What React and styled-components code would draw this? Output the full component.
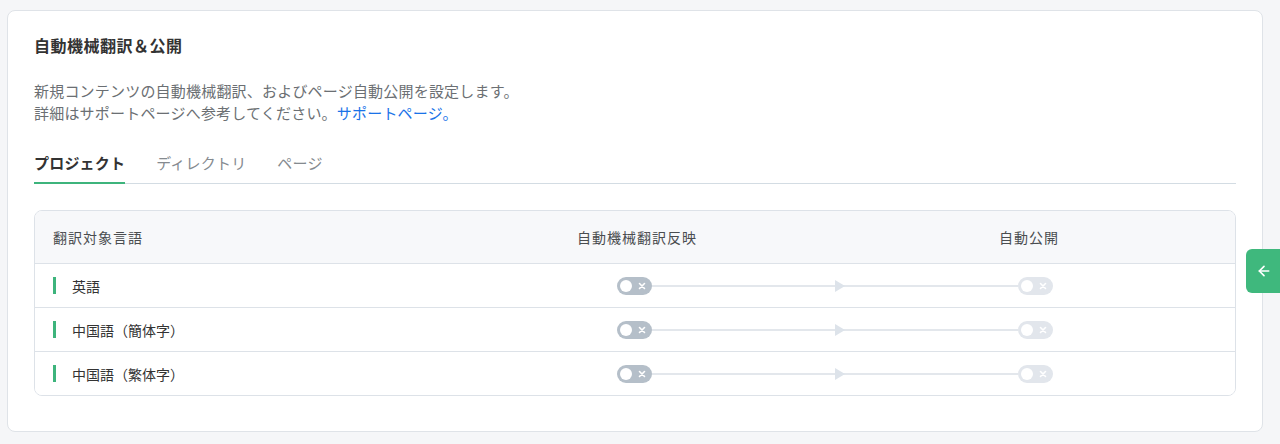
import styled, { createGlobalStyle } from 'styled-components';
import { ArrowLeft } from 'lucide-react';

const GlobalStyle = createGlobalStyle`
  body {
    margin: 0;
    background-color: #f5f6f8;
    font-family: "Noto Sans CJK JP", "Noto Sans", sans-serif;
    color: #333;
  }
`;

const Page = styled.div`
  padding: 10px 17px 12px 7px;
`;

const Card = styled.section`
  background-color: #fff;
  border: 1px solid #dfe3e8;
  border-radius: 8px;
  padding: 22px 26px 35px;
`;

const Title = styled.h1`
  margin: 0;
  font-size: 16px;
  line-height: 24px;
  font-weight: 700;
  letter-spacing: 0.5px;
  color: #333;
`;

const Description = styled.p`
  margin: 23px 0 0;
  font-size: 15px;
  line-height: 22px;
  letter-spacing: 0.2px;
  color: #6b6f73;
`;

const Link = styled.a`
  color: #1a73e8;
  text-decoration: none;
`;

const Tabs = styled.div`
  display: flex;
  gap: 31px;
  margin-top: 28px;
  border-bottom: 1px solid #d3dce3;
`;

const Tab = styled.div`
  font-size: 15px;
  line-height: 22px;
  padding-bottom: 8px;
  margin-bottom: -1px;
  letter-spacing: 0.2px;
  font-weight: ${(p) => (p.$active ? 700 : 400)};
  color: ${(p) => (p.$active ? '#333' : '#858a8f')};
  border-bottom: 2px solid ${(p) => (p.$active ? '#3db47c' : 'transparent')};
`;

const Table = styled.div`
  margin-top: 26px;
  border: 1px solid #dde2e8;
  border-radius: 8px;
  overflow: hidden;
`;

const Row = styled.div`
  display: grid;
  grid-template-columns: 416px 372px 1fr;
  align-items: center;
  height: ${(p) => (p.$head ? '52px' : '43px')};
  background-color: ${(p) => (p.$head ? '#f7f8fa' : '#fff')};
  border-bottom: 1px solid #dde2e8;

  &:last-child {
    border-bottom: none;
  }
`;

const HeadCell = styled.div`
  font-size: 14px;
  letter-spacing: 1px;
  color: #4a4d50;
  text-align: ${(p) => (p.$center ? 'center' : 'left')};
  padding-left: ${(p) => (p.$center ? '0' : '18px')};
`;

const LangCell = styled.div`
  display: flex;
  align-items: center;
  gap: 16px;
  padding-left: 18px;
  font-size: 14px;
  color: #333;

  &::before {
    content: '';
    width: 3px;
    height: 17px;
    background-color: #3db47c;
  }
`;

const Flow = styled.div`
  grid-column: 2 / 4;
  display: flex;
  align-items: center;
  padding: 0 182px 0 166px;
`;

const Toggle = styled.span`
  position: relative;
  flex: none;
  width: 35px;
  height: 18px;
  border-radius: 9px;
  background-color: ${(p) => (p.$muted ? '#e2e6ec' : '#b5bfc9')};

  &::before {
    content: '';
    position: absolute;
    left: 3px;
    top: 3px;
    width: 12px;
    height: 12px;
    border-radius: 50%;
    background-color: #fff;
  }
`;

const Cross = styled.svg`
  position: absolute;
  right: 6px;
  top: 5px;
`;

const Line = styled.div`
  flex: 1;
  display: flex;
  align-items: center;
  justify-content: center;
  height: 12px;
  background: linear-gradient(#e3e7ec, #e3e7ec) center / 100% 2px no-repeat;
`;

const Arrow = styled.span`
  margin-left: 10px;
  width: 0;
  height: 0;
  border-top: 6px solid transparent;
  border-bottom: 6px solid transparent;
  border-left: 10px solid #dde3ea;
`;

const SideButton = styled.button`
  position: fixed;
  right: 0;
  top: 249px;
  width: 34px;
  height: 44px;
  border: none;
  border-radius: 6px 0 0 6px;
  background-color: #3fb87d;
  color: #fff;
  display: flex;
  align-items: center;
  justify-content: center;
  padding: 0 0 0 2px;
`;

const languages = ['英語', '中国語（簡体字）', '中国語（繁体字）'];

const SwitchOff = ({ muted }) => (
  <Toggle $muted={muted}>
    <Cross width="8" height="8" viewBox="0 0 8 8">
      <path d="M1.5 1.5 L6.5 6.5 M6.5 1.5 L1.5 6.5" stroke="#fff" strokeWidth="1.6" strokeLinecap="round" />
    </Cross>
  </Toggle>
);

const App = () => {
  return (
    <Page>
      <GlobalStyle />
      <Card>
        <Title>自動機械翻訳＆公開</Title>
        <Description>
          新規コンテンツの自動機械翻訳、およびページ自動公開を設定します。
          <br />
          詳細はサポートページへ参考してください。<Link href="#">サポートページ。</Link>
        </Description>
        <Tabs>
          <Tab $active>プロジェクト</Tab>
          <Tab>ディレクトリ</Tab>
          <Tab>ページ</Tab>
        </Tabs>
        <Table>
          <Row $head>
            <HeadCell>翻訳対象言語</HeadCell>
            <HeadCell $center>自動機械翻訳反映</HeadCell>
            <HeadCell $center>自動公開</HeadCell>
          </Row>
          {languages.map((lang) => (
            <Row key={lang}>
              <LangCell>{lang}</LangCell>
              <Flow>
                <SwitchOff />
                <Line>
                  <Arrow />
                </Line>
                <SwitchOff muted />
              </Flow>
            </Row>
          ))}
        </Table>
      </Card>
      <SideButton aria-label="戻る">
        <ArrowLeft size={16} strokeWidth={2.5} />
      </SideButton>
    </Page>
  );
};

export default App;
